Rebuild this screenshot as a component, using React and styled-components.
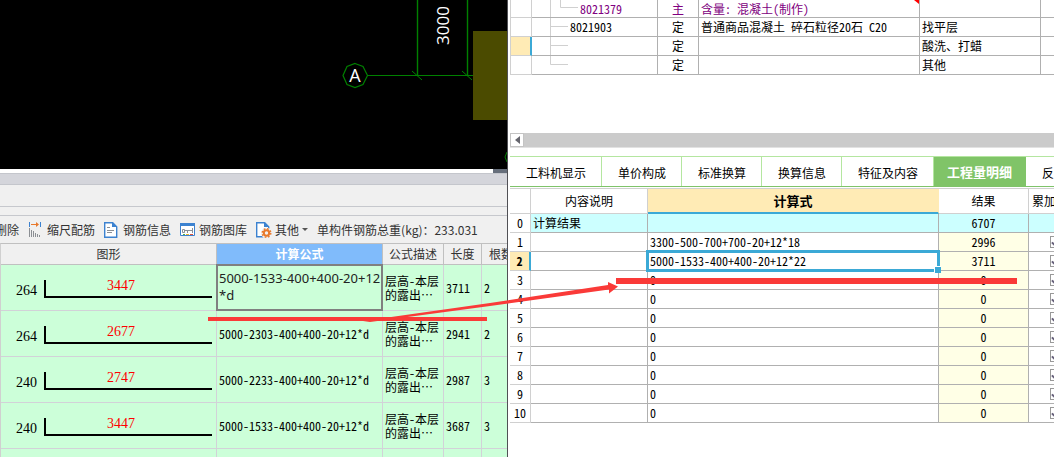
// src/App.jsx
import styled, { createGlobalStyle, css } from 'styled-components';

const cjk = '"Noto Sans CJK SC", "Liberation Sans", sans-serif';
const grid = '"Noto Sans Mono CJK SC", "Noto Sans CJK SC", sans-serif';

const GlobalStyle = createGlobalStyle`
  * {
    box-sizing: border-box;
  }

  body {
    margin: 0;
    background: #fff;
    color: #000;
    font: 12px/16px ${cjk};
  }

  button, input, textarea {
    font: inherit;
    color: inherit;
  }

  svg {
    display: block;
  }
`;

const Page = styled.main`
  position: relative;
  display: grid;
  grid-template-columns: minmax(0, 508fr) minmax(0, 546fr);
  height: 100vh;
  overflow: hidden;
`;

const DrawingPane = styled.section`
  display: flex;
  flex-direction: column;
  overflow: hidden;
  background: #f0f0f0;
  border-right: 1px solid #505055;
`;

const CadView = styled.div`
  flex: none;
  display: flex;
  justify-content: flex-end;
  background: #000;
`;

const ScrollStrip = styled.div`
  flex: none;
  display: flex;
  justify-content: flex-end;
  height: 4px;
  background: #fff;
`;

const ScrollStripEnd = styled.div`
  width: 14px;
  background: #666e7b;
`;

const DockTitle = styled.div`
  flex: none;
  height: 12px;
  background: #d4d5db;
  border-top: 1px solid #c4c6cc;
  border-bottom: 1px solid #c4c6cc;
`;

const DockBand = styled.div`
  flex: none;
  height: ${props => props.$height};
  border-bottom: 1px solid #c6c8cd;
`;

const Toolbar = styled.div`
  flex: none;
  display: flex;
  align-items: center;
  gap: 9px;
  height: 27px;
  margin-left: -5px;
  color: #333;
  white-space: nowrap;
`;

const ToolButton = styled.button`
  display: flex;
  flex: none;
  align-items: center;
  gap: 3px;
  padding: 0;
  border: 0;
  background: none;
`;

const RebarTable = styled.table`
  flex: none;
  width: calc(100% + 14px);
  table-layout: fixed;
  border-collapse: separate;
  border-spacing: 0;
  border-top: 1px solid #c0c0c0;
  border-left: 1px solid #d0d0d0;
`;

const RebarHead = styled.th`
  height: 21px;
  padding: 0;
  border-right: 1px solid #c0c0c0;
  border-bottom: 1px solid #c0c0c0;
  color: ${props => (props.$active ? '#fff' : '#333')};
  background: ${props => (props.$active ? '#80bbfb' : '#f0f0f0')};
  font-weight: ${props => (props.$active ? 700 : 400)};
`;

const RebarCell = styled.td`
  position: relative;
  height: 46px;
  padding: 0 2px;
  border-right: 1px solid #d2d2d8;
  border-bottom: 1px solid #d2d2d8;
  background: #ccffd9;
  font: 12px/14px ${grid};
  white-space: nowrap;
`;

const BarShape = styled.div`
  display: flex;
  align-items: center;
  padding: 2px 2px 0 13px;
  font: 14px/12px "Liberation Serif", serif;
`;

const BarHook = styled.span`
  width: 28px;
  padding-top: 4px;
`;

const BarLine = styled.span`
  flex: 1;
  height: 18px;
  padding-right: 16px;
  border-left: 2px solid #000;
  border-bottom: 2px solid #000;
  color: #f00;
  text-align: center;
`;

const FormulaEditor = styled.textarea`
  position: absolute;
  inset: -1px;
  width: calc(100% + 2px);
  height: calc(100% + 2px);
  padding: 4px 0 0 1px;
  border: 2px solid #808080;
  outline: 0;
  resize: none;
  overflow: hidden;
  background: #ccffd9;
  color: #222;
  font: 13px/17px "Noto Sans", ${cjk};
  word-break: break-all;
`;

const QuotaPane = styled.section`
  display: flex;
  flex-direction: column;
  overflow: hidden;
  padding-left: 2px;
  background: #fff;
`;

const UpperGrid = styled.div`
  flex: none;
  display: flex;
  flex-direction: column;
  justify-content: space-between;
  height: 148px;
  margin-bottom: 8px;
`;

const SheetTable = styled.table`
  width: calc(100% + ${props => props.$overhang});
  table-layout: fixed;
  border-collapse: separate;
  border-spacing: 0;
  font: 12px/16px ${grid};
`;

const SheetCell = styled.td`
  position: relative;
  height: ${props => props.$height || '19px'};
  padding: ${props => props.$padding || '0 2px'};
  border-right: 1px solid #b0b0b0;
  border-bottom: 1px solid #b0b0b0;
  background: ${props => props.$fill || '#fff'};
  color: ${props => props.$color || '#000'};
  text-align: ${props => props.$align || 'left'};
  white-space: nowrap;
`;

const RowHead = styled.th`
  height: ${props => props.$height || '19px'};
  padding: 0;
  border-right: 1px solid #d0d0d0;
  border-bottom: 1px solid #d0d0d0;
  border-left: ${props => (props.$edge ? '1px solid #d0d0d0' : '0')};
  font-weight: ${props => (props.$current ? 700 : 400)};

  ${props => props.$current && css`
    background: #ffebb5;
    border-right: 2px solid #3ba9d6;
  `}
`;

const TreeCode = styled.div`
  display: flex;
  align-items: center;
  gap: 2px;
`;

const NoteMark = styled.span`
  position: absolute;
  top: 0;
  right: 0;
  width: 5px;
  height: 4px;
  background: #f00;
  clip-path: polygon(0 0, 100% 0, 100% 100%);
`;

const ScrollBar = styled.div`
  display: flex;
  height: 15px;
  background: #cbcbcb;
  border-bottom: 1px solid #e2e2e2;
`;

const ScrollButton = styled.button`
  display: flex;
  align-items: center;
  justify-content: center;
  width: 14px;
  padding: 0;
  border: 1px solid #c4c4c4;
  background: #fff;
`;

const Tabs = styled.div`
  flex: none;
  display: flex;
  height: 31px;
  margin-bottom: 1px;
  border-top: 1px solid #b4e6a0;
  border-bottom: 1px solid #7fc36a;
`;

const Tab = styled.button`
  flex: none;
  padding: 3px 15px 0 16px;
  border: 0;
  border-right: 1px solid #b4e6a0;
  background: #fff;
  white-space: nowrap;

  ${props => props.$active && css`
    padding: 0 13px;
    border-right-color: #80c468;
    background: #80c468;
    color: #fff;
    font-size: 13px;
    font-weight: 700;
  `}
`;

const SheetHead = styled.th`
  height: 25px;
  padding: 0;
  border-right: 1px solid ${props => (props.$active ? '#ffebb5' : '#d0d0d0')};
  border-bottom: 1px solid #d0d0d0;
  font-weight: 400;
  white-space: nowrap;

  ${props => props.$active && css`
    background: #ffebb5;
    border-bottom: 2px solid #3ba9d6;
    font-size: 13px;
    font-weight: 700;
  `}
`;

const DetailTable = styled(SheetTable)`
  border-top: 1px solid #d0d0d0;
`;

const Selection = styled.span`
  position: absolute;
  z-index: 1;
  inset: -2px;
  border: 3px solid #3ba9d6;

  &::after {
    content: '';
    position: absolute;
    right: -4px;
    bottom: -4px;
    width: 6px;
    height: 6px;
    background: #3ba9d6;
    border: 1px solid #fff;
    border-right: 0;
    border-bottom: 0;
  }
`;

const Check = styled.input`
  appearance: none;
  display: block;
  width: 12px;
  height: 12px;
  margin: 0 auto;
  border: 1px solid #999;
  background: #fff;

  &:checked::after {
    content: '';
    display: block;
    width: 7px;
    height: 4px;
    margin: 2px 0 0 1px;
    border-left: 2px solid #66607a;
    border-bottom: 2px solid #66607a;
    transform: rotate(-45deg);
  }
`;

const Markup = styled.svg`
  position: absolute;
  top: 0;
  left: 0;
  pointer-events: none;
`;

const ScaleIcon = () => (
  <svg width="16" height="16" viewBox="0 0 16 16" fill="none">
    <path d="M1.500 0v5M12.500 0v5" stroke="#3c82d0" />
    <path d="M3 2.500h7" stroke="#e8792c" />
    <path d="M8 0l3 2.500-3 2.500z" fill="#e8792c" />
    <path d="M1.500 6v9M3.500 8v7M5.500 9v6M7.500 11v4M9.500 12v3M11.500 13v2" stroke="#8b8f94" />
  </svg>
);

const InfoIcon = () => (
  <svg width="16" height="16" viewBox="0 0 16 16" fill="none">
    <path d="M.7 .700h8l4 4v10.600H.700z" fill="#fff" stroke="#3c82d0" strokeWidth="1.400" />
    <path d="M8 0l5 5H8z" fill="#3c82d0" />
    <path d="M3 5.500h3M3 8.500h7M3 10.500h5" stroke="#8b8f94" />
  </svg>
);

const LibraryIcon = () => (
  <svg width="16" height="16" viewBox="0 0 16 16" fill="none">
    <path d="M.5 1.500h14v12H.500z" fill="#fff" stroke="#3c82d0" />
    <path d="M0 1h15v3H0z" fill="#3c82d0" />
    <path d="M2.500 7.500v3h2v-3zM5 8.500h7M7.500 8v3M12.500 6v5" stroke="#8b8f94" />
    <path d="M3 12.500h2" stroke="#4caf50" />
    <path d="M6 12.500h3" stroke="#e8b02c" />
    <path d="M10 12.500h3" stroke="#e0533c" />
  </svg>
);

const OtherIcon = () => (
  <svg width="16" height="16" viewBox="0 0 16 16" fill="none">
    <path d="M.7 .700h8l4 4v10H.700z" fill="#fff" stroke="#3c82d0" strokeWidth="1.400" />
    <path d="M8 0l5 5H8z" fill="#3c82d0" />
    <circle cx="10.500" cy="11" r="5.500" fill="#f0f0f0" />
    <circle cx="10.500" cy="11" r="2.700" stroke="#e8792c" strokeWidth="2" />
    <circle cx="10.500" cy="11" r="4.300" stroke="#e8792c" strokeWidth="1.400" strokeDasharray="1.700 1.680" />
  </svg>
);

const tools = [
  { label: '缩尺配筋', icon: <ScaleIcon /> },
  { label: '钢筋信息', icon: <InfoIcon /> },
  { label: '钢筋图库', icon: <LibraryIcon /> },
];

const rebars = [
  { hook: 264, bar: 3447, formula: '5000-1533-400+400-20+12*d', length: 3711, count: 2, editing: true },
  { hook: 264, bar: 2677, formula: '5000-2303-400+400-20+12*d', length: 2941, count: 2 },
  { hook: 240, bar: 2747, formula: '5000-2233-400+400-20+12*d', length: 2987, count: 3 },
  { hook: 240, bar: 3447, formula: '5000-1533-400+400-20+12*d', length: 3687, count: 3 },
];

const quotas = [
  { code: '8021379', kind: '主', name: '含量: 混凝土(制作)', part: '', child: true },
  { code: '8021903', kind: '定', name: '普通商品混凝土 碎石粒径20石 C20', part: '找平层' },
  { code: '', kind: '定', name: '', part: '酸洗、打蜡', current: true },
  { code: '', kind: '定', name: '', part: '其他', last: true },
];

const tabs = ['工料机显示', '单价构成', '标准换算', '换算信息', '特征及内容', '工程量明细', '反查'];

const details = [
  { formula: '3300-500-700+700-20+12*18', result: 2996 },
  { formula: '5000-1533-400+400-20+12*22', result: 3711, current: true },
  ...Array.from({ length: 8 }, () => ({ formula: '0', result: 0 })),
];

const Cad = () => (
  <CadView>
    <svg width="507" height="169" viewBox="0 0 507 169" fill="none" role="img" aria-label="轴网">
      <g stroke="#008000">
        <path d="M367 75.500h106" />
        <path d="M417.500 0v76M467.500 0v76" strokeWidth="1.400" />
        <path d="M412 71l10 9M462 71l10 9" />
        <path d="M355 63.500l8 3 4.500 9-4.500 9-8 3-8-3-4-9 4-9z" strokeWidth="1.200" />
        <path d="M507 152l-2 5 2 5" />
      </g>
      <rect x="473" y="31" width="34" height="89" fill="#4b4b00" />
      <text x="355" y="82" fill="#fff" fontSize="18" fontFamily="Open Sans, sans-serif" textAnchor="middle">A</text>
      <text
        transform="translate(449 45) rotate(-90)"
        fill="#fff"
        fontSize="17"
        fontFamily="Open Sans, sans-serif"
      >
        3000
      </text>
    </svg>
  </CadView>
);

const TreeLines = ({ child, last }) => (
  <svg width={child ? 46 : 36} height={child ? 17 : 18} fill="none" stroke="#d0d0d0">
    <path d={last ? 'M18.500 0v8.500' : 'M18.500 0v18'} />
    <path d={child ? 'M28.500 0v7.500h18' : 'M18.500 8.500h18'} />
  </svg>
);

const RebarEditor = () => (
  <RebarTable>
    <colgroup>
      <col style={{ width: 216 }} />
      <col style={{ width: 166 }} />
      <col style={{ width: 61 }} />
      <col style={{ width: 38 }} />
      <col />
    </colgroup>
    <thead>
      <tr>
        <RebarHead>图形</RebarHead>
        <RebarHead $active>计算公式</RebarHead>
        <RebarHead>公式描述</RebarHead>
        <RebarHead>长度</RebarHead>
        <RebarHead>根数</RebarHead>
      </tr>
    </thead>
    <tbody>
      {rebars.map((rebar, index) => (
        <tr key={index}>
          <RebarCell>
            <BarShape>
              <BarHook>{rebar.hook}</BarHook>
              <BarLine>{rebar.bar}</BarLine>
            </BarShape>
          </RebarCell>
          <RebarCell>
            {rebar.editing
              ? <FormulaEditor aria-label="计算公式" defaultValue={rebar.formula} spellCheck={false} />
              : rebar.formula}
          </RebarCell>
          <RebarCell>层高-本层<br />的露出…</RebarCell>
          <RebarCell>{rebar.length}</RebarCell>
          <RebarCell>{rebar.count}</RebarCell>
        </tr>
      ))}
      <tr>
        <RebarCell />
        <RebarCell />
        <RebarCell />
        <RebarCell />
        <RebarCell />
      </tr>
    </tbody>
  </RebarTable>
);

const QuotaTable = () => (
  <SheetTable $overhang="40px">
    <colgroup>
      <col style={{ width: 22 }} />
      <col style={{ width: 126 }} />
      <col style={{ width: 41 }} />
      <col />
      <col style={{ width: 121 }} />
      <col style={{ width: 53 }} />
    </colgroup>
    <tbody>
      {quotas.map((quota, index) => {
        const height = quota.child ? '18px' : '19px';
        const color = quota.child ? '#800080' : '#000';
        return (
          <tr key={index}>
            <RowHead $edge $height={height} $current={quota.current} />
            <SheetCell $height={height} $color={color} $padding="0">
              <TreeCode>
                <TreeLines child={quota.child} last={quota.last} />
                <span>{quota.code}</span>
              </TreeCode>
            </SheetCell>
            <SheetCell $height={height} $color={color} $align="center">{quota.kind}</SheetCell>
            <SheetCell $height={height} $color={color}>
              {quota.name}
              {quota.child && <NoteMark />}
            </SheetCell>
            <SheetCell $height={height}>{quota.part}</SheetCell>
            <SheetCell $height={height} />
          </tr>
        );
      })}
    </tbody>
  </SheetTable>
);

const DetailSheet = () => (
  <DetailTable $overhang="30px">
    <colgroup>
      <col style={{ width: 21 }} />
      <col style={{ width: 117 }} />
      <col />
      <col style={{ width: 90 }} />
      <col style={{ width: 55 }} />
    </colgroup>
    <thead>
      <tr>
        <SheetHead />
        <SheetHead>内容说明</SheetHead>
        <SheetHead $active>计算式</SheetHead>
        <SheetHead>结果</SheetHead>
        <SheetHead>累加标识</SheetHead>
      </tr>
    </thead>
    <tbody>
      <tr>
        <RowHead>0</RowHead>
        <SheetCell $fill="#ccffff">计算结果</SheetCell>
        <SheetCell $fill="#ccffff" />
        <SheetCell $fill="#ccffff" $align="center">6707</SheetCell>
        <SheetCell $fill="#ccffff" />
      </tr>
      {details.map((detail, index) => (
        <tr key={index}>
          <RowHead $current={detail.current}>{index + 1}</RowHead>
          <SheetCell />
          <SheetCell>
            {detail.formula}
            {detail.current && <Selection />}
          </SheetCell>
          <SheetCell $fill="#ffffe6" $align="center">{detail.result}</SheetCell>
          <SheetCell>
            <Check type="checkbox" aria-label={`累加标识 ${index + 1}`} defaultChecked />
          </SheetCell>
        </tr>
      ))}
    </tbody>
  </DetailTable>
);

const App = () => {
  return (
    <>
      <GlobalStyle />
      <Page>
        <DrawingPane>
          <Cad />
          <ScrollStrip>
            <ScrollStripEnd />
          </ScrollStrip>
          <DockTitle />
          <DockBand $height="22px" />
          <DockBand $height="9px" />
          <Toolbar>
            <ToolButton>删除</ToolButton>
            {tools.map((tool) => (
              <ToolButton key={tool.label}>
                {tool.icon}
                {tool.label}
              </ToolButton>
            ))}
            <ToolButton>
              <OtherIcon />
              其他
              <svg width="6" height="4" viewBox="0 0 6 4">
                <path d="M0 0h6l-3 3z" fill="#555" />
              </svg>
            </ToolButton>
            <span>单构件钢筋总重(kg)：233.031</span>
          </Toolbar>
          <RebarEditor />
        </DrawingPane>

        <QuotaPane>
          <UpperGrid>
            <QuotaTable />
            <ScrollBar>
              <ScrollButton aria-label="向左滚动">
                <svg width="5" height="8" viewBox="0 0 5 8">
                  <path d="M5 0v8L0 4z" fill="#66666e" />
                </svg>
              </ScrollButton>
            </ScrollBar>
          </UpperGrid>
          <Tabs>
            {tabs.map((tab) => (
              <Tab key={tab} $active={tab === '工程量明细'}>{tab}</Tab>
            ))}
          </Tabs>
          <DetailSheet />
        </QuotaPane>

        <Markup width="1054" height="457" viewBox="0 0 1054 457" fill="#fa3a38">
          <path d="M208 317h279v4H208z" />
          <path d="M616 278h401v6H616z" />
          <path d="M363 321L490 303L608 285v-3l10 4.500-9 7v-4L490 306L370 322z" />
        </Markup>
      </Page>
    </>
  );
};

export default App;
